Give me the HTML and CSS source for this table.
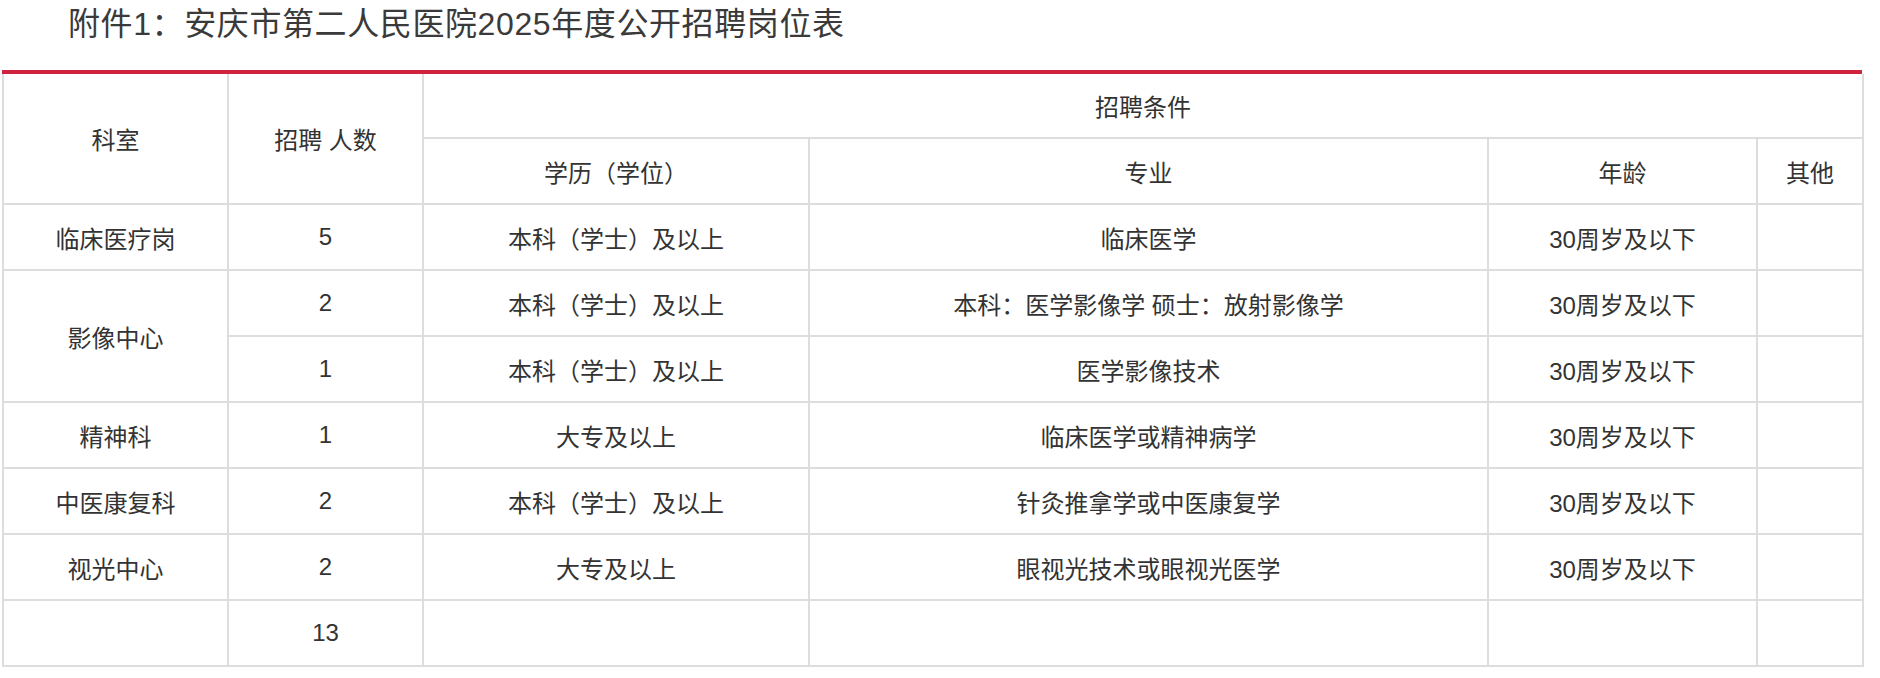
FILE: index.html
```html
<!DOCTYPE html>
<html lang="zh-CN">
<head>
<meta charset="utf-8">
<title>附件1：安庆市第二人民医院2025年度公开招聘岗位表</title>
<link rel="stylesheet" href="styles.css">
</head>
<body>
<div class="page">
  <h1 class="title">附件1：安庆市第二人民医院2025年度公开招聘岗位表</h1>
  <div class="table-wrap">
    <table class="jobs">
      <colgroup>
        <col class="c-dept">
        <col class="c-num">
        <col class="c-edu">
        <col class="c-major">
        <col class="c-age">
        <col class="c-other">
      </colgroup>
      <tbody>
        <tr class="head-top">
          <td rowspan="2">科室</td>
          <td rowspan="2">招聘 人数</td>
          <td colspan="4">招聘条件</td>
        </tr>
        <tr>
          <td>学历（学位）</td>
          <td>专业</td>
          <td>年龄</td>
          <td>其他</td>
        </tr>
        <tr>
          <td>临床医疗岗</td>
          <td>5</td>
          <td>本科（学士）及以上</td>
          <td>临床医学</td>
          <td>30周岁及以下</td>
          <td></td>
        </tr>
        <tr>
          <td rowspan="2">影像中心</td>
          <td>2</td>
          <td>本科（学士）及以上</td>
          <td>本科：医学影像学 硕士：放射影像学</td>
          <td>30周岁及以下</td>
          <td></td>
        </tr>
        <tr>
          <td>1</td>
          <td>本科（学士）及以上</td>
          <td>医学影像技术</td>
          <td>30周岁及以下</td>
          <td></td>
        </tr>
        <tr>
          <td>精神科</td>
          <td>1</td>
          <td>大专及以上</td>
          <td>临床医学或精神病学</td>
          <td>30周岁及以下</td>
          <td></td>
        </tr>
        <tr>
          <td>中医康复科</td>
          <td>2</td>
          <td>本科（学士）及以上</td>
          <td>针灸推拿学或中医康复学</td>
          <td>30周岁及以下</td>
          <td></td>
        </tr>
        <tr>
          <td>视光中心</td>
          <td>2</td>
          <td>大专及以上</td>
          <td>眼视光技术或眼视光医学</td>
          <td>30周岁及以下</td>
          <td></td>
        </tr>
        <tr>
          <td></td>
          <td>13</td>
          <td></td>
          <td></td>
          <td></td>
          <td></td>
        </tr>
      </tbody>
    </table>
  </div>
</div>
</body>
</html>
```

FILE: styles.css
```css
html, body {
  margin: 0;
  padding: 0;
  background: #ffffff;
}

body {
  font-family: "Liberation Sans", "Noto Sans CJK SC", sans-serif;
  color: #333333;
}

.page {
  padding-left: 2px;
}

.title {
  margin: 0;
  height: 70px;
  padding-left: 66px;
  font-size: 32px;
  line-height: 48px;
  letter-spacing: 0.6px;
  font-weight: normal;
  color: #3a3a3a;
}

.table-wrap {
  width: 1860px;
  border-top: 4px solid #cf2340;
}

.jobs {
  width: 1860px;
  table-layout: fixed;
  border-collapse: collapse;
  font-size: 24px;
  color: #333333;
}

.c-dept { width: 225px; }
.c-num { width: 195px; }
.c-edu { width: 386px; }
.c-major { width: 679px; }
.c-age { width: 269px; }
.c-other { width: 106px; }

.jobs td {
  height: 64px;
  padding: 0;
  border: 2px solid #dddddd;
  text-align: center;
  vertical-align: middle;
  white-space: nowrap;
}

.jobs .head-top td {
  border-top: none;
  height: 63px;
}
```
